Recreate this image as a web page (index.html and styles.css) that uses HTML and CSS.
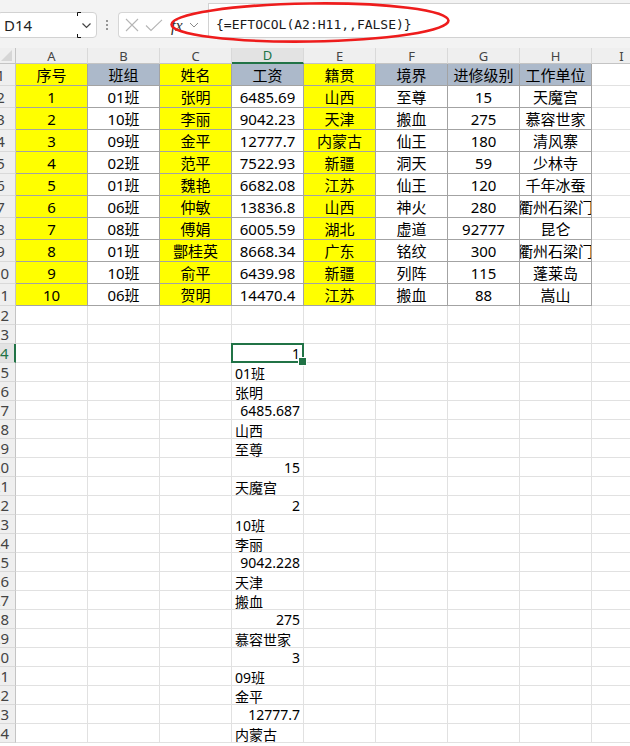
FILE: index.html
```html
<!DOCTYPE html>
<html>
  <head>
    <meta charset="utf-8" />
    <title>EFTOCOL</title>
    <link rel="stylesheet" href="styles.css">
  </head>
  <body>
    <div id="toolbar">
      <div id="namebox">
        <span class="ref">D14</span>
        <svg class="drop" width="19" height="26" viewBox="0 0 19 26">
          <path d="M0.5 4 V0.5 H4 M0.5 22 V25.5 H4" fill="none" stroke="#111" stroke-width="1"/>
          <path d="M5.5 11.5 L9.5 15.5 L13.5 11.5" fill="none" stroke="#444" stroke-width="1.2"/>
        </svg>
      </div>
      <svg class="dots" width="4" height="12" viewBox="0 0 4 12">
        <circle cx="2" cy="2" r="1" fill="#777"/>
        <circle cx="2" cy="6" r="1" fill="#777"/>
        <circle cx="2" cy="10" r="1" fill="#777"/>
      </svg>
      <div id="fxgroup">
        <svg width="14" height="14" viewBox="0 0 14 14">
          <path d="M1 1 L13 13 M13 1 L1 13" stroke="#b5b5b5" stroke-width="1.1"/>
        </svg>
        <svg width="18" height="13" viewBox="0 0 18 13">
          <path d="M1 6.5 L6 11.5 L17 0.8" fill="none" stroke="#b5b5b5" stroke-width="1.1"/>
        </svg>
        <span class="fx">fx</span>
        <svg width="10" height="6" viewBox="0 0 10 6">
          <path d="M1 1 L5 5 L9 1" fill="none" stroke="#8a8a8a" stroke-width="1"/>
        </svg>
      </div>
      <div id="formula">{=EFTOCOL(A2:H11,,FALSE)}</div>
    </div>
    <svg id="mark" width="630" height="50" viewBox="0 0 630 50">
      <ellipse cx="310" cy="22.5" rx="138.5" ry="19" transform="rotate(-0.8 310 22.5)" fill="none" stroke="#ee1c1c" stroke-width="2.6"/>
    </svg>
    <div id="sheet"></div>
    <script>
      const cols = ["A", "B", "C", "D", "E", "F", "G", "H", "I"];
      const table = [
        ["序号", "班组", "姓名", "工资", "籍贯", "境界", "进修级别", "工作单位"],
        ["1", "01班", "张明", "6485.69", "山西", "至尊", "15", "天魔宫"],
        ["2", "10班", "李丽", "9042.23", "天津", "搬血", "275", "慕容世家"],
        ["3", "09班", "金平", "12777.7", "内蒙古", "仙王", "180", "清风寨"],
        ["4", "02班", "范平", "7522.93", "新疆", "洞天", "59", "少林寺"],
        ["5", "01班", "魏艳", "6682.08", "江苏", "仙王", "120", "千年冰蚕"],
        ["6", "06班", "仲敏", "13836.8", "山西", "神火", "280", "衢州石梁门"],
        ["7", "08班", "傅娟", "6005.59", "湖北", "虚道", "92777", "昆仑"],
        ["8", "01班", "酆桂英", "8668.34", "广东", "铭纹", "300", "衢州石梁门"],
        ["9", "10班", "俞平", "6439.98", "新疆", "列阵", "115", "蓬莱岛"],
        ["10", "06班", "贺明", "14470.4", "江苏", "搬血", "88", "嵩山"]
      ];
      const headFill = ["y", "g", "y", "g", "y", "g", "g", "g"];
      const bodyFill = ["y", "", "y", "", "y", "", "", ""];
      const spill = ["1", "01班", "张明", "6485.687", "山西", "至尊", "15", "天魔宫",
        "2", "10班", "李丽", "9042.228", "天津", "搬血", "275", "慕容世家",
        "3", "09班", "金平", "12777.7", "内蒙古"];

      let html = `<div class="ch corner"><svg width="11" height="11" viewBox="0 0 11 11"><path d="M11 0 V11 H0 Z" fill="#d6d6d6"/></svg></div>`;
      cols.forEach((c) => {
        html += `<div class="ch${c === "D" ? " on" : ""}">${c}</div>`;
      });

      for (let r = 1; r <= 34; r++) {
        html += `<div class="rh${r === 14 ? " on" : ""}${r > 11 ? " small" : ""}">${r}</div>`;
        cols.forEach((c, i) => {
          if (r <= 11 && i < 8) {
            const fill = r === 1 ? headFill[i] : bodyFill[i];
            html += `<div class="c t ${fill}"><span>${table[r - 1][i]}</span></div>`;
          } else if (c === "D" && r >= 14) {
            const v = spill[r - 14];
            const kind = isNaN(Number(v)) ? "txt" : "num";
            html += `<div class="c ${kind}${r === 14 ? " active" : ""}">${v}</div>`;
          } else {
            html += `<div class="c"></div>`;
          }
        });
      }
      document.querySelector("#sheet").innerHTML = html;
    </script>
  </body>
</html>
```

FILE: styles.css
```css
* {
  box-sizing: border-box;
}
body {
  margin: 0;
  width: 630px;
  height: 746px;
  overflow: hidden;
  position: relative;
  background-color: #fff;
  font-family: "Noto Sans", "Noto Sans CJK SC", sans-serif;
  color: #000;
}
#toolbar {
  height: 48px;
  background-color: #f3f3f3;
  display: flex;
  align-items: flex-start;
}
#namebox {
  margin: 12px 0 0 -3px;
  width: 100px;
  height: 26px;
  background-color: #fff;
  border: 1px solid #d2d2d2;
  border-radius: 4px;
  display: flex;
  align-items: center;
  justify-content: space-between;
}
.ref {
  padding-left: 6px;
  font-size: 15px;
  color: #222;
}
.drop {
  margin-top: -1px;
  margin-bottom: -1px;
}
.dots {
  margin: 19px 0 0 8px;
}
#fxgroup {
  margin: 12px 0 0 9px;
  width: 90px;
  height: 26px;
  background-color: #fff;
  border: 1px solid #d6d6d6;
  border-right: none;
  border-radius: 4px 0 0 4px;
  display: flex;
  align-items: center;
  gap: 6px;
  padding-left: 6px;
}
.fx {
  font-family: "Liberation Serif", serif;
  font-style: italic;
  font-size: 16px;
  color: #333;
  margin-left: 2px;
  margin-top: 1px;
}
#formula {
  flex: 1;
  margin-top: 3px;
  height: 35px;
  background-color: #fff;
  border: 1px solid #d2d2d2;
  border-right: none;
  padding: 13px 0 0 7px;
  font-family: "DejaVu Sans Mono", monospace;
  font-size: 13px;
  line-height: 16px;
  color: #1a1a1a;
  white-space: nowrap;
}
#mark {
  position: absolute;
  top: 0;
  left: 0;
  pointer-events: none;
}
#sheet {
  display: grid;
  margin-left: -14px;
  grid-template-columns: 30px repeat(8, 72px) 60px;
  grid-template-rows: 16px repeat(11, 22px) repeat(23, 19px);
}
.ch {
  background-color: #efefef;
  border-right: 1px solid #d9d9d9;
  border-bottom: 1px solid #c4c4c4;
  display: flex;
  align-items: center;
  justify-content: center;
  font-size: 13px;
  color: #444;
}
.ch.on {
  background-color: #e3e3e3;
  border-bottom: 2px solid #217346;
  color: #217346;
}
.corner {
  justify-content: flex-end;
  align-items: flex-start;
  padding: 2px 3px 0 0;
  border-right: 1px solid #c4c4c4;
}
.rh {
  background-color: #efefef;
  border-right: 1px solid #c4c4c4;
  border-bottom: 1px solid #d9d9d9;
  display: flex;
  align-items: center;
  justify-content: center;
  font-size: 15px;
  color: #444;
  overflow: hidden;
}
.rh.on {
  background-color: #e3e3e3;
  border-right: 2px solid #217346;
  color: #217346;
}
.c {
  border-right: 1px solid #e1e1e1;
  border-bottom: 1px solid #e1e1e1;
  display: flex;
  align-items: center;
  padding: 1px 3px 0;
  font-size: 14px;
  white-space: nowrap;
  overflow: hidden;
}
.t {
  border-right-color: #a3a3a3;
  border-bottom-color: #a3a3a3;
  justify-content: center;
  padding: 0;
  font-size: 15px;
}
.t span {
  flex-shrink: 0;
}
.y {
  background-color: #ffff00;
}
.g {
  background-color: #acb9ca;
}
.txt {
  justify-content: flex-start;
}
.num {
  justify-content: flex-end;
}
.active {
  position: relative;
  overflow: visible;
}
.active::before {
  content: "";
  position: absolute;
  top: -1px;
  left: -1px;
  right: -1px;
  bottom: -1px;
  border: 2px solid #217346;
  z-index: 2;
}
.active::after {
  content: "";
  position: absolute;
  right: -4px;
  bottom: -4px;
  width: 7px;
  height: 7px;
  background-color: #217346;
  border: 1px solid #fff;
  z-index: 3;
}
```
